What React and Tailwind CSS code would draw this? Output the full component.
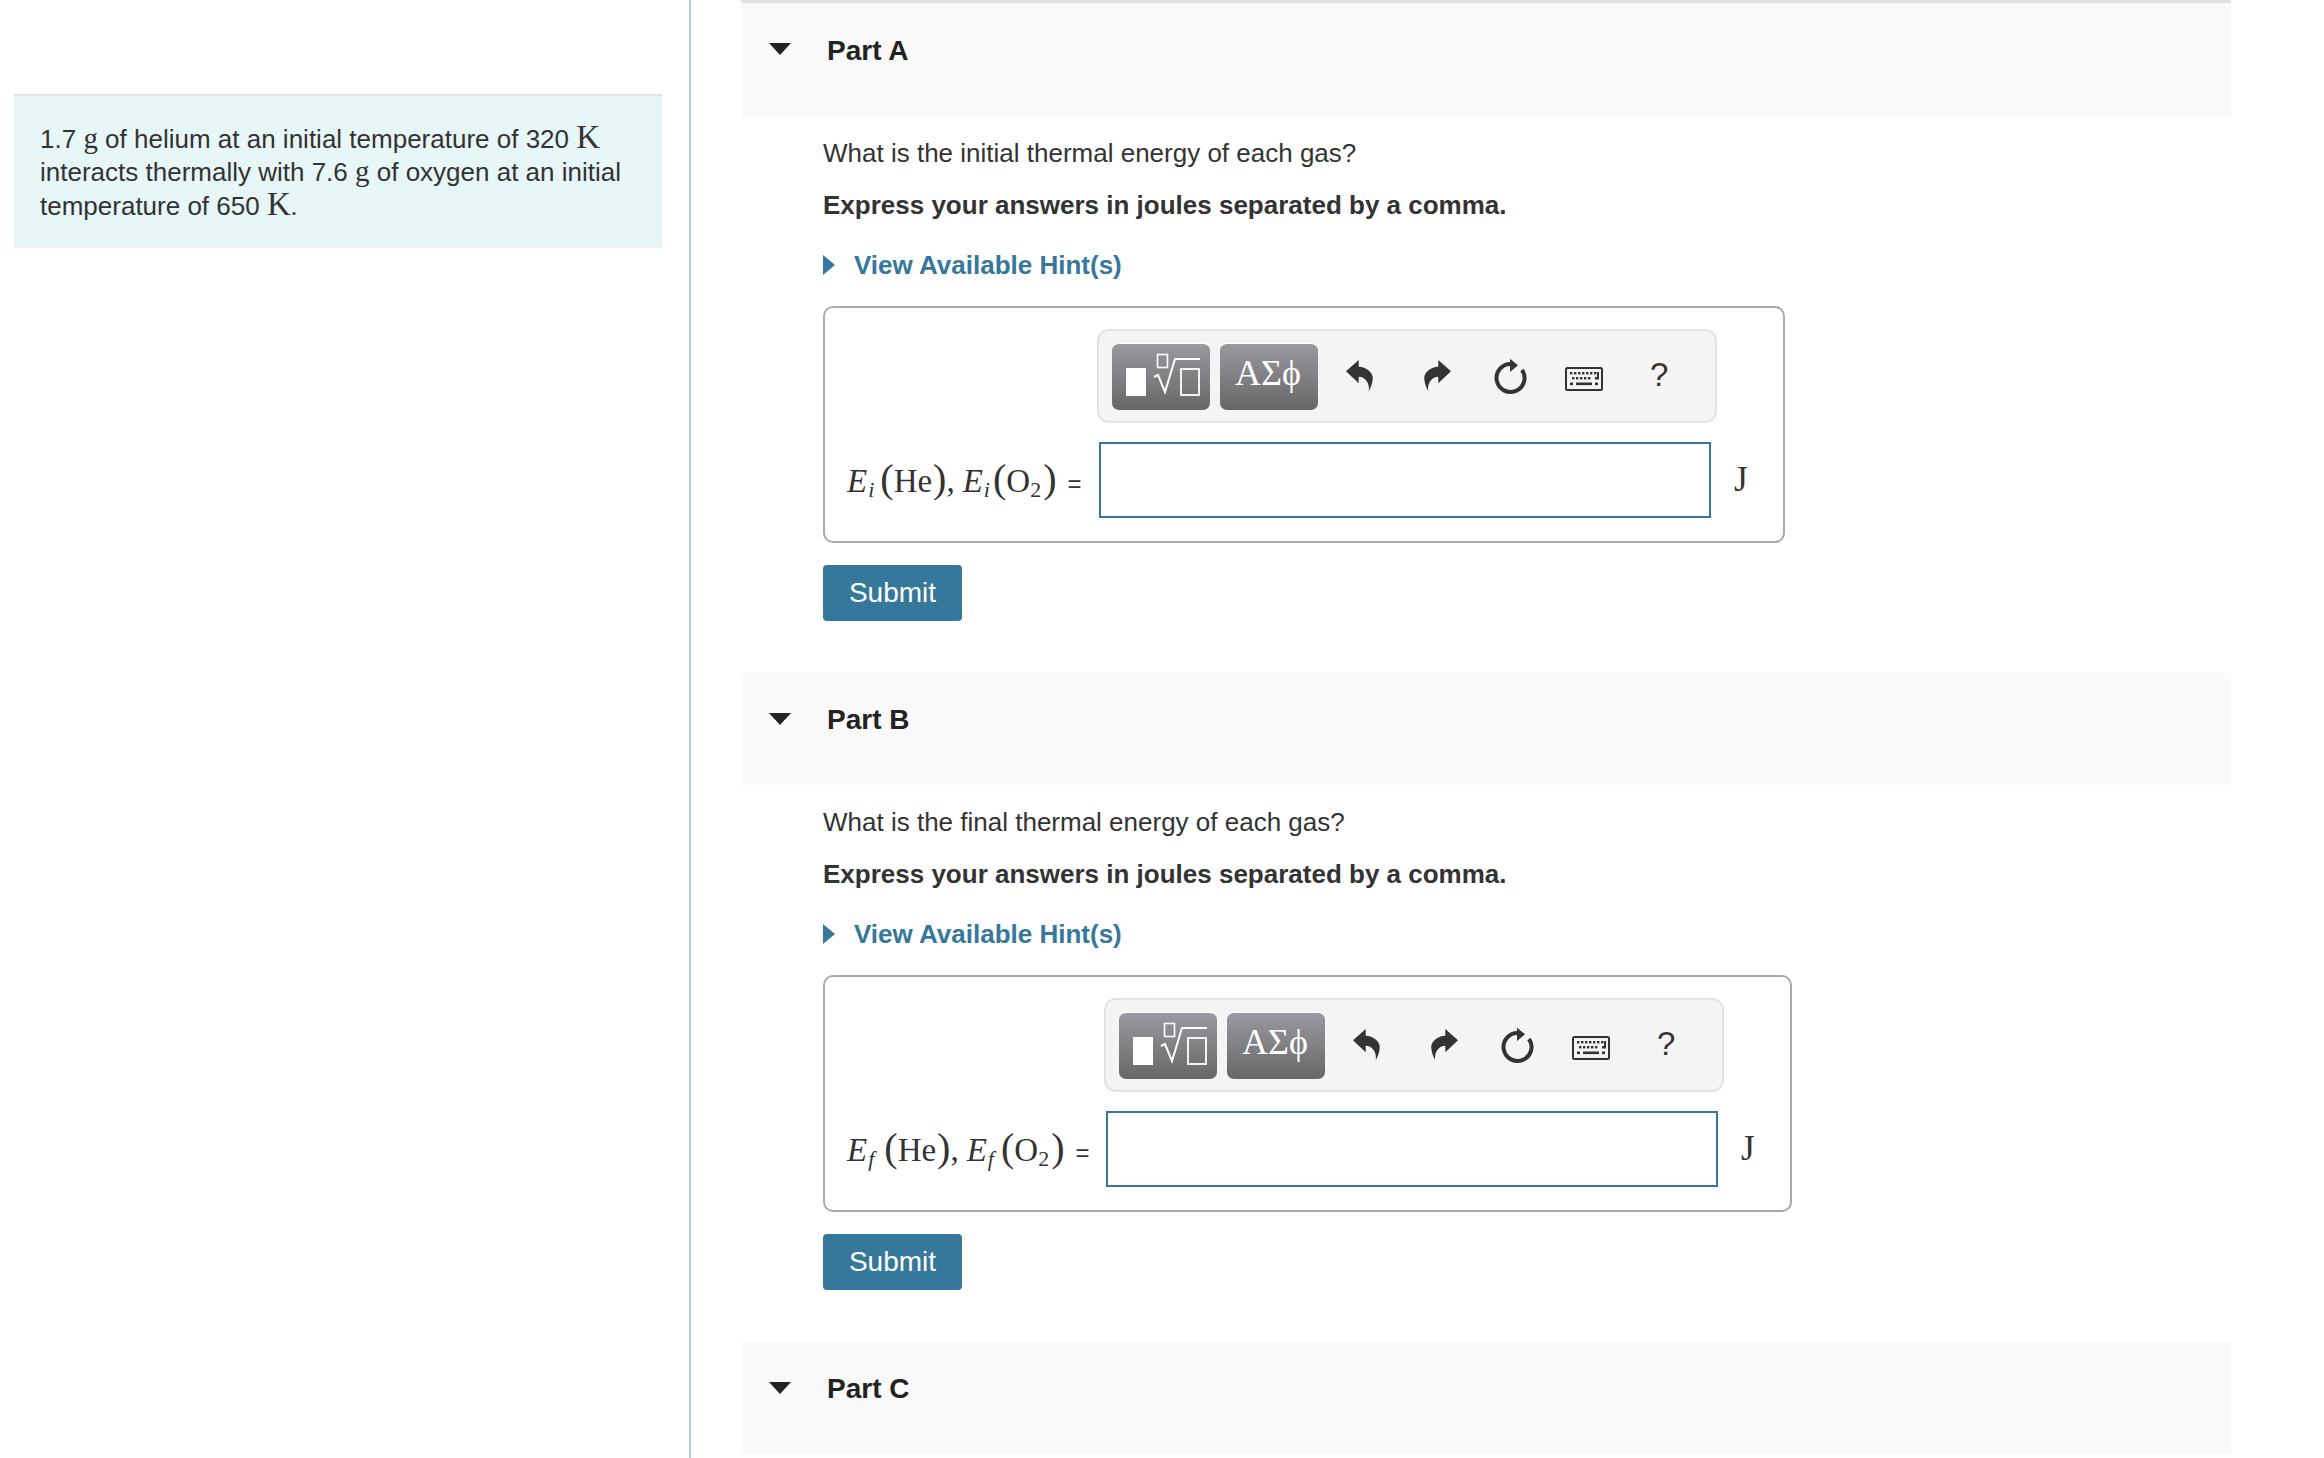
import React from 'react';

const serif = { fontFamily: '"Liberation Serif", serif' };

function MathIcon() {
  return (
    <svg viewBox="0 0 98 66" className="w-full h-full">
      <rect x="14" y="24" width="20" height="28" fill="#fff" />
      <rect x="45.5" y="10.5" width="10" height="13" fill="none" stroke="#fff" strokeWidth="1.6" />
      <path d="M42 33 L46 31 L53 48 L63 15 L88 15" fill="none" stroke="#fff" strokeWidth="2" />
      <rect x="69" y="25" width="18" height="26" fill="none" stroke="#fff" strokeWidth="1.8" />
    </svg>
  );
}

function UndoIcon({ flip }) {
  return (
    <svg viewBox="0 0 27 32" className={flip ? 'w-[27px] h-[32px] -scale-x-100' : 'w-[27px] h-[32px]'}>
      <path d="M0 11.3 L12.7 0 L12.7 6.7 C22 7 27.5 14 26.7 19 C26.4 24 24.5 28 22.7 31.3 C24 24 20 17 12.7 16.7 L12.7 23.3 Z" fill="#333" />
    </svg>
  );
}

function RefreshIcon() {
  return (
    <svg viewBox="0 0 34 38" className="w-[34px] h-[38px]">
      <path d="M16.7 6 A14 14 0 1 0 28 12" fill="none" stroke="#333" strokeWidth="4" />
      <path d="M16 0.7 L24 7.3 L16 14 Z" fill="#333" />
    </svg>
  );
}

function KeyboardIcon() {
  const rows = [
    [5, 9, 13, 17, 21, 25, 29],
    [7, 11, 15, 19, 23],
  ];
  return (
    <svg viewBox="0 0 38 24" className="w-[38px] h-[24px]">
      <rect x="1" y="1" width="36" height="22" rx="1.5" fill="#f4f4f4" stroke="#333" strokeWidth="2" />
      {rows[0].map(x => <rect key={x} x={x} y="5" width="2.4" height="2.4" fill="#333" />)}
      {rows[1].map(x => <rect key={x} x={x} y="10" width="2.4" height="2.4" fill="#333" />)}
      <path d="M32 5 h2 v7.4 h-4 v-2.4 h2 Z" fill="#333" />
      <rect x="5" y="15.5" width="3" height="2.6" fill="#333" />
      <rect x="11" y="15.5" width="16" height="2.6" fill="#333" />
      <rect x="30" y="15.5" width="3" height="2.6" fill="#333" />
    </svg>
  );
}

function ToolButton({ children }) {
  return (
    <div className="w-[98px] h-[67px] rounded-[7px] border-t border-white bg-gradient-to-b from-[#9b99a1] to-[#676767] flex items-center justify-center">
      {children}
    </div>
  );
}

function Toolbar() {
  return (
    <div className="col-start-2 -ml-[2px] -mr-[6px] h-[94px] rounded-[12px] border-2 border-[#e2e2e2] bg-[#f4f4f4] flex items-center pl-[13px]">
      <ToolButton><MathIcon /></ToolButton>
      <div className="ml-[10px]">
        <ToolButton>
          <span className="text-white text-[36px] leading-none mb-[7px] mr-[2px]" style={serif}>ΑΣϕ</span>
        </ToolButton>
      </div>
      <div className="ml-[28px]"><UndoIcon /></div>
      <div className="ml-[51px]"><UndoIcon flip /></div>
      <div className="ml-[43px] mt-[1px]"><RefreshIcon /></div>
      <div className="ml-[37px] mt-[5px]"><KeyboardIcon /></div>
      <div className="ml-[47px] -mt-[4px] text-[33px] leading-none text-[#333]">?</div>
    </div>
  );
}

function Energy({ sub }) {
  return (
    <span>
      <i>E</i>
      <i className={`text-[22px] relative top-[5px] ml-[1px] ${sub === 'f' ? 'mr-[6px]' : 'mr-[2px]'}`}>{sub}</i>
    </span>
  );
}

function Paren({ children, className }) {
  return <span className={`text-[40px] ${className}`}>{children}</span>;
}

function MathLabel({ sub, width }) {
  return (
    <div className={`${width} col-start-1 -mt-[3px] text-[33px] leading-none text-[#333] whitespace-nowrap`} style={serif}>
      <Energy sub={sub} /><Paren className="ml-[4px]">(</Paren>He<Paren className="ml-[1px]">)</Paren>,
      <span className="ml-[8px]"><Energy sub={sub} /></span><Paren className="ml-[1px]">(</Paren>O<span className="text-[22px] relative top-[5px]">2</span><Paren className="ml-[2px]">)</Paren>
      <span className="text-[24px] ml-[11px]" style={{ fontFamily: '"Liberation Sans", sans-serif' }}>=</span>
    </div>
  );
}

function Part({ title, first, question, sub, labelWidth, body = true }) {
  return (
    <section>
      <div className={`${first ? 'h-[117px] border-t-[3px] border-[#e0e0e0] pt-[31px]' : 'h-[112px] pt-[30px]'} bg-[#f9f9f9] flex items-start`}>
        <svg viewBox="0 0 22 12" className={`ml-[28px] ${first ? 'mt-[9px]' : 'mt-[10px]'} w-[22px] h-[12px] shrink-0`}>
          <path d="M0 0 H22 L11 12 Z" fill="#222" />
        </svg>
        <h2 className="ml-[36px] text-[28px] leading-[34px] font-bold text-[#222]">{title}</h2>
      </div>
      {body && (
        <div className="ml-[82px] mb-[52px] text-[26px] leading-[34px] text-[#333]">
          <p className={first ? 'mt-[19px]' : 'mt-[20px]'}>{question}</p>
          <p className="mt-[18px] font-bold">Express your answers in joules separated by a comma.</p>
          <div className="mt-[26px] flex items-center font-bold text-[#36789b]">
            <svg viewBox="0 0 12 20" className="w-[12px] h-[20px]">
              <path d="M0 0 L12 10 L0 20 Z" fill="#36789b" />
            </svg>
            <span className="ml-[19px]">View Available Hint(s)</span>
          </div>
          <div className="mt-[24px] w-fit rounded-[10px] border-2 border-[#aaaaaa] pl-[22px] pt-[21px] pb-[23px] grid grid-cols-[auto_612px_72px] gap-y-[19px] items-center">
            <Toolbar />
            <MathLabel sub={sub} width={labelWidth} />
            <input className="h-[76px] border-2 border-[#36789b] bg-white outline-none" />
            <div className="ml-[23px] -mt-[2px] text-[35px] leading-none text-[#333]" style={serif}>J</div>
          </div>
          <button className="mt-[22px] w-[139px] h-[56px] rounded-[4px] bg-[#36789b] text-white text-[28px] leading-none">Submit</button>
        </div>
      )}
    </section>
  );
}

export default function App() {
  return (
    <div className="w-[2324px] h-[1458px] overflow-hidden bg-white flex" style={{ fontFamily: '"Liberation Sans", Arial, sans-serif' }}>
      <aside className="w-[691px] shrink-0 border-r-2 border-[#b9c9dc] pl-[14px] pr-[27px] pt-[94px]">
        <div className="border-t-2 border-[#e0e4e4] bg-[#e7f6f6] px-[26px] pt-[25px] pb-[24px] text-[26px] leading-[32.5px] text-[#333]">
          1.7 <span className="text-[29px] leading-none" style={serif}>g</span> of helium at an initial temperature of 320 <span className="text-[33px] leading-none" style={serif}>K</span> interacts thermally with 7.6 <span className="text-[29px] leading-none" style={serif}>g</span> of oxygen at an initial temperature of 650 <span className="text-[33px] leading-none" style={serif}>K</span><span style={serif}>.</span>
        </div>
      </aside>
      <main className="w-[1490px] ml-[50px]">
        <Part first title="Part A" question="What is the initial thermal energy of each gas?" sub="i" labelWidth="w-[252px]" />
        <Part title="Part B" question="What is the final thermal energy of each gas?" sub="f" labelWidth="w-[259px]" />
        <Part title="Part C" body={false} />
      </main>
    </div>
  );
}
